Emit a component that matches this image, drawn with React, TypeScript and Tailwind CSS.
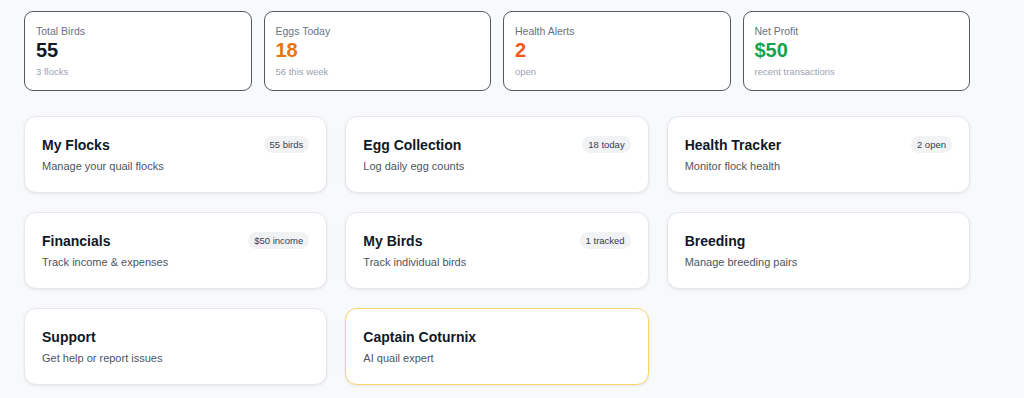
import React from "react";

const stats = [
  { label: "Total Birds", value: "55", sub: "3 flocks", color: "text-[#111827]" },
  { label: "Eggs Today", value: "18", sub: "56 this week", color: "text-[#e8740e]" },
  { label: "Health Alerts", value: "2", sub: "open", color: "text-[#f4561c]" },
  { label: "Net Profit", value: "$50", sub: "recent transactions", color: "text-[#17a34a]" },
];

const cards: { title: string; desc: string; badge?: string; special?: boolean }[] = [
  { title: "My Flocks", desc: "Manage your quail flocks", badge: "55 birds" },
  { title: "Egg Collection", desc: "Log daily egg counts", badge: "18 today" },
  { title: "Health Tracker", desc: "Monitor flock health", badge: "2 open" },
  { title: "Financials", desc: "Track income & expenses", badge: "$50 income" },
  { title: "My Birds", desc: "Track individual birds", badge: "1 tracked" },
  { title: "Breeding", desc: "Manage breeding pairs" },
  { title: "Support", desc: "Get help or report issues" },
  { title: "Captain Coturnix", desc: "AI quail expert", special: true },
];

export default function App() {
  return (
    <div
      className="min-h-screen bg-[#f8f9fb] pl-6 pt-[11px]"
      style={{ fontFamily: '"Liberation Sans", Arial, sans-serif' }}
    >
      <div className="w-[946px]">
        <div className="grid grid-cols-4 gap-3">
          {stats.map((s) => (
            <div
              key={s.label}
              className="h-[80px] rounded-[9px] border border-[#555a60] bg-white pl-[11px] pt-3"
            >
              <div className="text-[10.5px] leading-[14px] text-[#6b7280]">{s.label}</div>
              <div className={`text-[20px] font-bold leading-6 ${s.color}`}>{s.value}</div>
              <div className="mt-[3px] text-[9.5px] leading-[14px] text-[#9ca3af]">{s.sub}</div>
            </div>
          ))}
        </div>
        <div className="mt-[25px] grid grid-cols-3 gap-x-[18px] gap-y-[19px]">
          {cards.map((c) => (
            <div
              key={c.title}
              className={`rounded-xl border bg-white px-[17px] pt-[17px] pb-[18px] shadow-[0_1px_3px_rgba(0,0,0,0.08)] ${
                c.special ? "border-[#f8d56c]" : "border-[#e5e7eb]"
              }`}
            >
              <div className="flex items-start justify-between">
                <div className="text-[14px] font-bold leading-[22px] text-[#111827]">{c.title}</div>
                {c.badge && (
                  <span className="mt-[2px] h-[17px] rounded-full bg-[#f1f2f4] px-[6px] text-[9.5px] leading-[17px] text-[#374151]">
                    {c.badge}
                  </span>
                )}
              </div>
              <div className="mt-[2px] text-[11px] leading-4 text-[#4b5563]">{c.desc}</div>
            </div>
          ))}
        </div>
      </div>
    </div>
  );
}
